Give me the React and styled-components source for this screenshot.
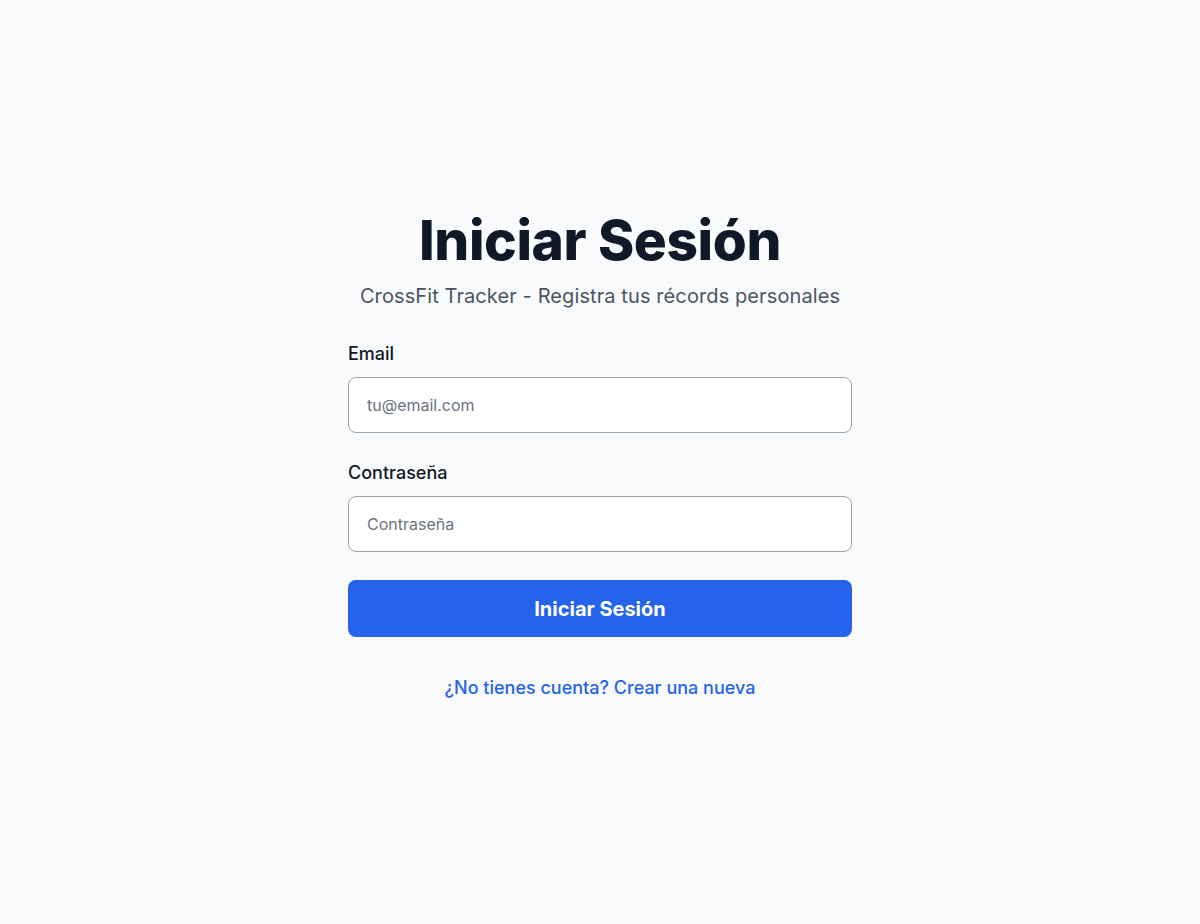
import React from 'react'
import styled, { createGlobalStyle } from 'styled-components'

const GlobalStyle = createGlobalStyle`
  html, body {
    margin: 0;
    padding: 0;
    background: #f9fafb;
    font-family: Inter, "Noto Sans", sans-serif;
  }
  * { box-sizing: border-box; }
`

const Page = styled.div`
  min-height: 100vh;
  display: flex;
  align-items: center;
  justify-content: center;
  padding: 0 24px 16px;
`

const Card = styled.div`
  width: 504px;
  display: flex;
  flex-direction: column;
`

const Header = styled.div`
  text-align: center;
  margin-bottom: 32px;
`

const Title = styled.h1`
  margin: 0;
  font-size: 55px;
  line-height: 60px;
  font-weight: 800;
  color: #111827;
  letter-spacing: -0.4px;
`

const Subtitle = styled.p`
  margin: 12px 0 0;
  font-size: 20px;
  line-height: 28px;
  color: #4b5563;
  letter-spacing: 0.1px;
`

const Form = styled.form`
  display: flex;
  flex-direction: column;
  gap: 28px;
`

const Field = styled.div`
  display: flex;
  flex-direction: column;
  gap: 11px;
`

const Label = styled.label`
  font-size: 18px;
  line-height: 24px;
  font-weight: 500;
  color: #111827;
`

const Input = styled.input`
  height: 56px;
  width: 100%;
  padding: 0 18px;
  border: 1px solid #9ca3af;
  border-radius: 8px;
  background: #fff;
  font-family: inherit;
  font-size: 16px;
  color: #111827;
  outline: none;

  &::placeholder {
    color: #6b7280;
  }
`

const Button = styled.button`
  height: 57px;
  border: none;
  border-radius: 8px;
  background: #2563eb;
  color: #fff;
  font-family: inherit;
  font-size: 20px;
  font-weight: 700;
  cursor: pointer;
`

const Footer = styled.div`
  margin-top: 40px;
  text-align: center;
`

const Link = styled.a`
  color: #2563eb;
  font-size: 18px;
  font-weight: 500;
  text-decoration: none;
`

export default function App() {
  return (
    <>
      <GlobalStyle />
      <Page>
        <Card>
          <Header>
            <Title>Iniciar Sesión</Title>
            <Subtitle>CrossFit Tracker - Registra tus récords personales</Subtitle>
          </Header>
          <Form onSubmit={e => e.preventDefault()}>
            <Field>
              <Label htmlFor="email">Email</Label>
              <Input id="email" type="email" placeholder="tu@email.com" />
            </Field>
            <Field>
              <Label htmlFor="password">Contraseña</Label>
              <Input id="password" type="password" placeholder="Contraseña" />
            </Field>
            <Button type="submit">Iniciar Sesión</Button>
          </Form>
          <Footer>
            <Link href="#">¿No tienes cuenta? Crear una nueva</Link>
          </Footer>
        </Card>
      </Page>
    </>
  )
}
